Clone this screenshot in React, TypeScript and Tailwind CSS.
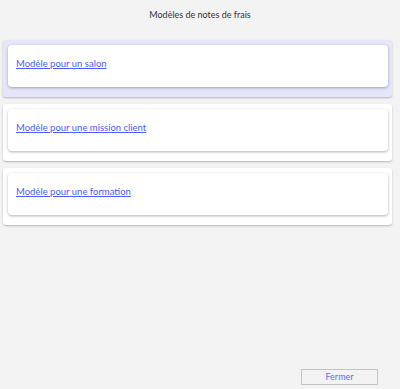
import React from 'react'

const templates = [
  { label: 'Modèle pour un salon', active: true },
  { label: 'Modèle pour une mission client', active: false },
  { label: 'Modèle pour une formation', active: false },
]

export default function App() {
  return (
    <div
      className="h-[389px] w-[400px] bg-[#f3f3f3] flex flex-col overflow-hidden"
      style={{ fontFamily: 'Lato, "Open Sans", sans-serif' }}
    >
      <h1 className="pt-[9px] text-center text-[9px] leading-[12px] text-[#333]">
        Modèles de notes de frais
      </h1>

      <div className="mt-[19px] flex flex-col gap-[7px] pl-[3px] pr-[8px]">
        {templates.map(({ label, active }) => (
          <div
            key={label}
            className={`rounded-[3px] pt-[5px] pb-[10px] pl-[5px] pr-[4px] shadow-[0_1px_2px_rgba(0,0,0,0.25)] ${
              active ? 'bg-[#e6e6fb]' : 'bg-white'
            }`}
          >
            <div className="h-[42px] rounded-[4px] bg-white pl-[8px] pt-[13px] text-[9.5px] leading-[12px] shadow-[0_1px_3px_rgba(0,0,0,0.3)]">
              <a href="#" className="text-[#4a5cff] underline">
                {label}
              </a>
            </div>
          </div>
        ))}
      </div>

      <div className="mt-auto flex justify-end pr-[22px] pb-[4px]">
        <button className="h-[16px] w-[77px] border border-[#c4c4c4] bg-[#f3f3f3] text-[9px] leading-[12px] text-[#5a6cff]">
          Fermer
        </button>
      </div>
    </div>
  )
}
